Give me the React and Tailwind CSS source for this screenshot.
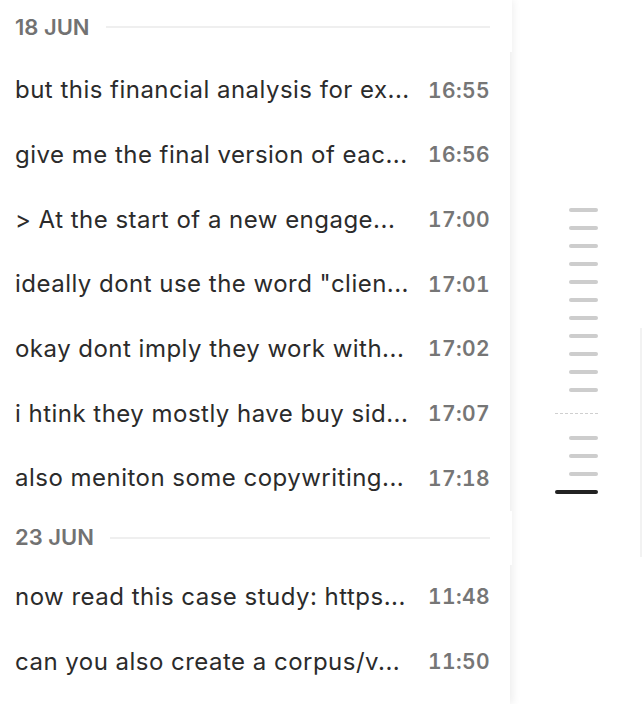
export default function App() {
  const groups = [
    {
      date: "18 JUN",
      first: true,
      rows: [
        ["but this financial analysis for ex...", "16:55"],
        ["give me the final version of eac...", "16:56"],
        ["> At the start of a new engage...", "17:00"],
        ['ideally dont use the word "clien...', "17:01"],
        ["okay dont imply they work with...", "17:02"],
        ["i htink they mostly have buy sid...", "17:07"],
        ["also meniton some copywriting...", "17:18"],
      ],
    },
    {
      date: "23 JUN",
      rows: [
        ["now read this case study: https...", "11:48"],
        ["can you also create a corpus/v...", "11:50"],
      ],
    },
  ];

  const before = Array.from({ length: 11 });
  const after = Array.from({ length: 3 });

  return (
    <div
      className="flex h-[704px] w-[642px] overflow-hidden bg-white"
      style={{ fontFamily: "Inter, 'Noto Sans', sans-serif" }}
    >
      {/* message list */}
      <div className="relative z-10 flex w-[510px] shrink-0 flex-col bg-white shadow-[3px_0_8px_rgba(0,0,0,0.07)]">
        {groups.map((g) => (
          <div key={g.date} className="flex flex-col">
            <div
              className={`-mr-[2px] flex items-center gap-4 bg-white pl-[15px] pr-[22px] ${
                g.first ? "h-[52px] mb-[6px] pt-[2px]" : "h-[54px]"
              }`}
            >
              <span className="text-[22px] font-semibold text-[#727272]">
                {g.date}
              </span>
              <div className="h-[2px] flex-1 bg-[#efefef]" />
            </div>
            {g.rows.map(([text, time]) => (
              <div
                key={time}
                className="flex h-[64.67px] items-center justify-between pl-[15px] pr-[20px]"
              >
                <span className="whitespace-nowrap text-[24px] tracking-[0.02em] text-[#2b2b2b]">
                  {text}
                </span>
                <span className="text-[21px] font-semibold tabular-nums tracking-[0.02em] text-[#767676]">
                  {time}
                </span>
              </div>
            ))}
          </div>
        ))}
      </div>

      {/* scroll scrubber */}
      <div className="flex flex-1 flex-col items-end pt-[208px] pr-[42px]">
        {before.map((_, i) => (
          <div key={i} className="mb-[14px] h-[4px] w-[29px] rounded-full bg-[#cdcdcd]" />
        ))}
        <div className="mb-[22px] mt-[7px] w-[43px] border-t border-dashed border-[#cfcfcf]" />
        {after.map((_, i) => (
          <div key={i} className="mb-[14px] h-[4px] w-[29px] rounded-full bg-[#cdcdcd]" />
        ))}
        <div className="h-[4px] w-[43px] rounded-full bg-[#222]" />
      </div>

      {/* edge of next panel */}
      <div className="mt-[328px] h-[229px] w-[2px] shrink-0 bg-[#f2f2f2]" />
    </div>
  );
}
